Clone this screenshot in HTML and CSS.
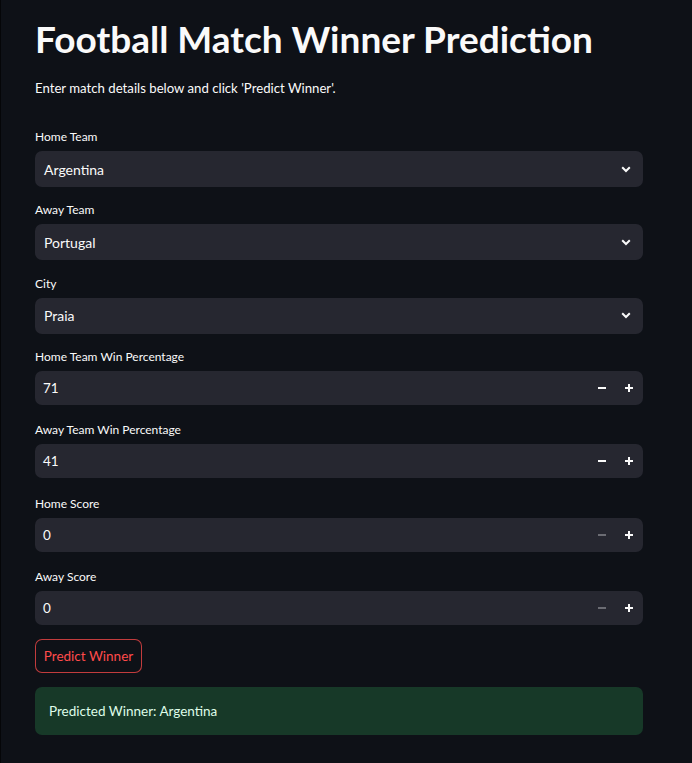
FILE: index.html
```html
<!DOCTYPE html>
<html lang="en">
<head>
<meta charset="utf-8">
<title>Football Match Winner Prediction</title>
<link rel="stylesheet" href="styles.css">
</head>
<body>
<main class="app">
  <h1 class="title">Football Match Winner Prediction</h1>
  <p class="intro">Enter match details below and click 'Predict Winner'.</p>

  <div class="field field-select">
    <label class="label">Home Team</label>
    <div class="box select"><span class="value">Argentina</span>
      <svg class="chev" width="10" height="7" viewBox="0 0 10 7"><path d="M1.2 1.3 5 5 8.8 1.3" fill="none" stroke="#fafafa" stroke-width="2"/></svg>
    </div>
  </div>

  <div class="field field-select">
    <label class="label">Away Team</label>
    <div class="box select"><span class="value">Portugal</span>
      <svg class="chev" width="10" height="7" viewBox="0 0 10 7"><path d="M1.2 1.3 5 5 8.8 1.3" fill="none" stroke="#fafafa" stroke-width="2"/></svg>
    </div>
  </div>

  <div class="field field-select">
    <label class="label">City</label>
    <div class="box select"><span class="value">Praia</span>
      <svg class="chev" width="10" height="7" viewBox="0 0 10 7"><path d="M1.2 1.3 5 5 8.8 1.3" fill="none" stroke="#fafafa" stroke-width="2"/></svg>
    </div>
  </div>

  <div class="field field-number">
    <label class="label">Home Team Win Percentage</label>
    <div class="box number"><span class="value num">71</span>
      <span class="step minus"></span><span class="step plus"></span>
    </div>
  </div>

  <div class="field field-number">
    <label class="label">Away Team Win Percentage</label>
    <div class="box number"><span class="value num">41</span>
      <span class="step minus"></span><span class="step plus"></span>
    </div>
  </div>

  <div class="field field-number">
    <label class="label">Home Score</label>
    <div class="box number"><span class="value num">0</span>
      <span class="step minus disabled"></span><span class="step plus"></span>
    </div>
  </div>

  <div class="field field-number">
    <label class="label">Away Score</label>
    <div class="box number"><span class="value num">0</span>
      <span class="step minus disabled"></span><span class="step plus"></span>
    </div>
  </div>

  <button class="btn">Predict Winner</button>

  <div class="success">Predicted Winner: Argentina</div>
</main>
</body>
</html>
```
FILE: styles.css
```css
html, body {
  margin: 0;
  padding: 0;
  background: #0e1117;
}
body {
  height: 763px;
  overflow: hidden;
  border-left: 1px solid #050608;
  box-sizing: border-box;
  font-family: "Lato", "Liberation Sans", sans-serif;
  color: #fafafa;
}
.app {
  width: 608px;
  padding: 17px 0 0 34px;
  display: flex;
  flex-direction: column;
}
.title {
  margin: 0;
  font-size: 37px;
  line-height: 44px;
  font-weight: 700;
  letter-spacing: 0;
}
.intro {
  margin: 18px 0 31px;
  font-size: 13.2px;
  line-height: 18px;
}
.field {
  display: flex;
  flex-direction: column;
}
.field-select { margin-bottom: 14.4px; }
.field-number { margin-bottom: 16.2px; }
.label {
  font-size: 12px;
  line-height: 17px;
  margin-bottom: 6px;
}
.box {
  background: #262730;
  border-radius: 7px;
  display: flex;
  align-items: center;
}
.select { height: 36px; padding: 0 12px 0 9px; }
.number { height: 34px; padding: 0 10px 0 8px; }
.value {
  flex: 1;
  font-size: 14px;
}
.num { font-size: 13.5px; }
.chev { display: block; }
.step {
  width: 8px;
  height: 8px;
  position: relative;
  margin-left: 19px;
}
.step::before, .step::after {
  content: "";
  position: absolute;
  background: #fafafa;
}
.minus::before { left: 0; top: 3px; width: 8px; height: 2px; }
.minus::after { display: none; }
.plus::before { left: 0; top: 3px; width: 8px; height: 2px; }
.plus::after { left: 3px; top: 0; width: 2px; height: 8px; }
.minus.disabled::before { background: #6b6c73; }
.btn {
  align-self: flex-start;
  margin-top: -2px;
  width: 107px;
  height: 34px;
  background: #0e1117;
  border: 1px solid rgba(255, 75, 75, 0.75);
  border-radius: 7px;
  color: #ff4b4b;
  font-family: inherit;
  font-size: 13.5px;
  padding: 0;
}
.success {
  margin-top: 14px;
  height: 48px;
  box-sizing: border-box;
  background: #173928;
  border-radius: 7px;
  color: #dffde9;
  font-size: 13.5px;
  padding: 0 14px;
  display: flex;
  align-items: center;
}
```
